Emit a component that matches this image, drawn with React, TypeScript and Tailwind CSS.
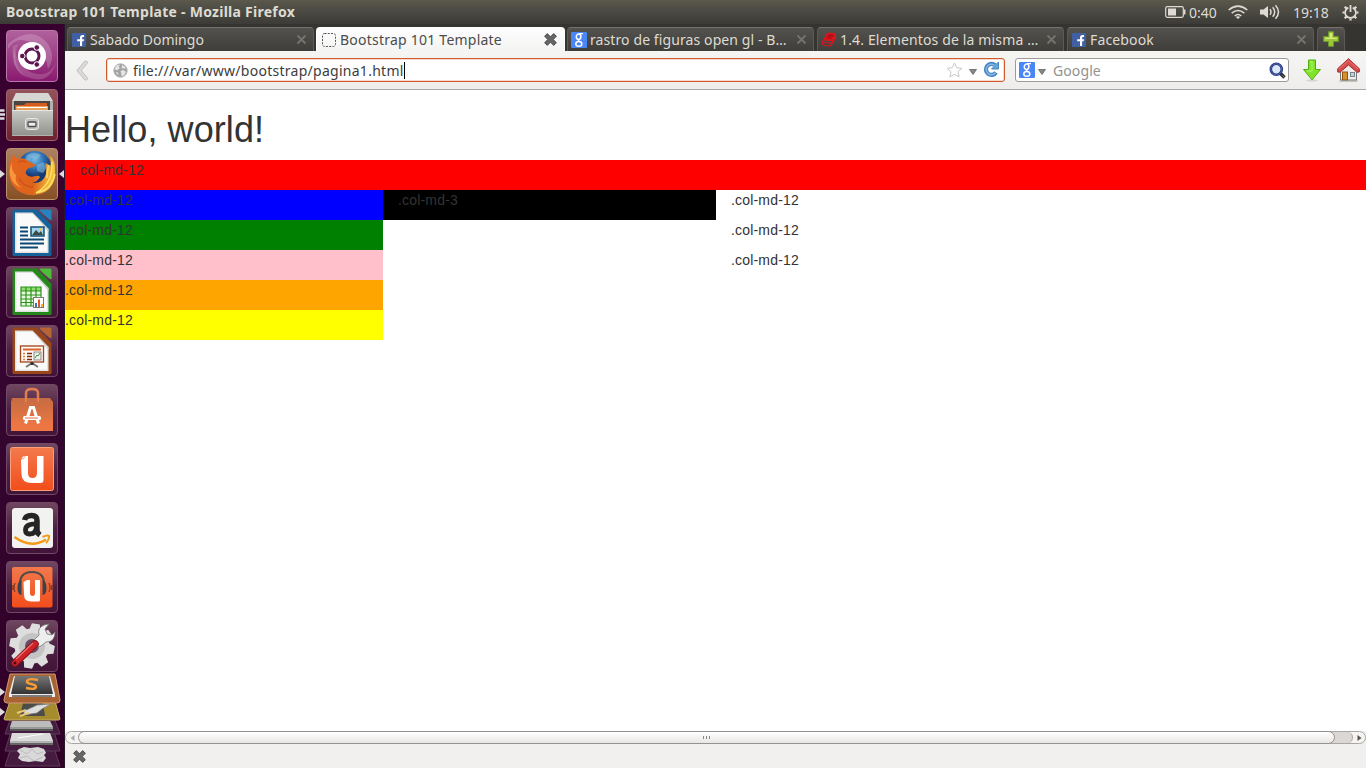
import React from "react";

const ui = "font-['Noto_Sans','Open_Sans',sans-serif]";

function Facebook() {
  return (
    <svg width="14" height="14" viewBox="0 0 14 14" className="shrink-0">
      <rect width="14" height="14" fill="#4160a4" />
      <path d="M8 13V8.3H5.2V6.2H8V4.6Q8 2 10.6 2H12v2h-1.1q-.8 0-.8.9v1.3H12l-.3 2.1h-1.6V13z" fill="#fff" />
    </svg>
  );
}

function GoogleG() {
  return (
    <svg width="16" height="16" viewBox="0 0 16 16" className="shrink-0">
      <rect width="16" height="16" rx="1" fill="#4a86f5" />
      <g fill="none" stroke="#fff">
        <ellipse cx="7.6" cy="4.8" rx="2.3" ry="2.7" strokeWidth="1.5" />
        <path d="M8 1.7h4M8.9 7.2q-2.8 1-.4 2.2" strokeWidth="1.3" />
        <ellipse cx="7.8" cy="11.9" rx="3" ry="2.3" strokeWidth="1.5" />
      </g>
    </svg>
  );
}

function Book() {
  return (
    <svg width="16" height="16" viewBox="0 0 16 16" className="shrink-0">
      <path d="M6.500 1 14.500 1.800 10.500 8.500 2.500 8z" fill="#d3101a" stroke="#e0141c" strokeLinejoin="round" />
      <path d="M2.500 8 1.300 10.500Q1.200 12.800 3 13.300l6.500.7L14.500 6V2M2.500 10.500l7.500.700 4-6.500" fill="none" stroke="#e0141c" strokeWidth="1.100" />
      <path d="m7.500 3.200 4.500.300M6.500 5.200l4.200.200" stroke="#7d1014" strokeWidth=".8" />
    </svg>
  );
}

function CloseDim() {
  return (
    <svg width="11" height="11" viewBox="0 0 11 11" className="shrink-0">
      <path d="m1.500 1.500 8 8m0-8-8 8" stroke="#75736e" strokeWidth="1.900" />
    </svg>
  );
}

function CloseBold() {
  return (
    <svg width="13" height="13" viewBox="0 0 13 13" className="shrink-0">
      <path d="M3.3.6 6.5 3.8 9.7.6l2.7 2.7-3.2 3.2 3.2 3.2-2.7 2.7-3.2-3.2-3.2 3.2L.6 9.7l3.2-3.2L.6 3.3z" fill="#666" stroke="#444" strokeWidth=".9" />
    </svg>
  );
}

function Tab({ icon, label, spacing, width, active }: { icon: React.ReactNode; label: string; spacing: string; width: string; active?: boolean }) {
  return (
    <div
      className={`flex h-6 shrink-0 items-center rounded-t-[4px] border border-b-0 ${width} ${
        active ? "border-white bg-gradient-to-b from-[#fdfdfd] to-[#f4f4f3] pr-[7px] text-[#4c4c4c]" : "border-[#74736e] border-x-[#5b5a56] bg-gradient-to-b from-[#53524e] to-[#3f3e3a] pr-[6px] text-[#dfdbd2]"
      }`}
    >
      {icon}
      <span className={`whitespace-nowrap text-[14px] leading-[22px] ${spacing}`}>{label}</span>
      <span className="ml-auto">{active ? <CloseBold /> : <CloseDim />}</span>
    </div>
  );
}

function TitleBar() {
  return (
    <header className="flex h-6 items-center bg-gradient-to-b from-[#5b594c] via-[#4a4942] to-[#3c3b37] text-[#dfdbd2]">
      <span className="ml-[6px] whitespace-nowrap text-[14px] font-bold leading-6 tracking-[0.26px]">Bootstrap 101 Template - Mozilla Firefox</span>
      <div className="ml-auto flex items-center">
        <svg width="21" height="12" viewBox="0 0 21 12">
          <rect x=".7" y=".7" width="17.6" height="10.6" rx="1.5" fill="none" stroke="#dfdbd2" strokeWidth="1.2" />
          <rect x="3" y="2.5" width="8" height="7" fill="#dfdbd2" />
          <path d="M19.7 3.5v5" stroke="#dfdbd2" strokeWidth="1.5" />
        </svg>
        <span className="ml-[3px] w-[28px] whitespace-nowrap text-[14px]">0:40</span>
        <svg width="20" height="14" viewBox="0 0 20 14" className="ml-[11px]">
          <g fill="none" stroke="#dfdbd2" strokeWidth="1.6">
            <path d="M.7 5Q10-2.8 19.3 5M3.7 8.2q6.3-5.4 12.6 0M6.7 11q3.3-3 6.6 0" />
          </g>
          <path d="m7.8 12 2.2 2 2.2-2Q10 10.4 7.8 12z" fill="#dfdbd2" />
        </svg>
        <svg width="20" height="16" viewBox="0 0 20 16" className="ml-[12px]">
          <path d="M0 5.500h3.500L8 2v12l-4.500-3.500H0z" fill="#dfdbd2" />
          <path d="M10 5.300q2 2.700 0 5.400M12.700 3.200q4 4.800 0 9.600M15.500 1.200q6 6.800 0 13.600" fill="none" stroke="#dfdbd2" strokeWidth="1.500" />
        </svg>
        <span className="ml-[13px] w-[36px] whitespace-nowrap text-[14px]">19:18</span>
        <svg width="17" height="17" viewBox="0 0 17 17" className="ml-[13px] mr-[7px]">
          <g fill="none" stroke="#dfdbd2">
            <path d="M6.300 3.600a5.400 5.400 0 1 0 4.400 0" strokeWidth="1.800" />
            <path d="M8.500 1v7" strokeWidth="1.800" />
            <path d="M.5 8.500h2M14.500 8.500h2M8.500 14.500v2M2.700 2.700l1.700 1.700M14.300 2.700l-1.700 1.700M2.700 14.300l1.700-1.700M14.300 14.300l-1.700-1.700" strokeWidth="2.200" />
          </g>
        </svg>
      </div>
    </header>
  );
}

function TabStrip() {
  return (
    <div className="flex h-[27px] items-end bg-[#353430] pl-[2px]">
      <Tab width="mr-[2px] w-[247px] pl-1" icon={<Facebook />} label="Sabado Domingo" spacing="ml-1" />
      <Tab
        width="mr-[2px] w-[249px] pl-[5px]"
        active
        icon={
          <svg width="14" height="14" viewBox="0 0 14 14" className="shrink-0">
            <rect x=".5" y=".5" width="13" height="13" rx="2" fill="none" stroke="#555" strokeDasharray="2 1.250" />
          </svg>
        }
        label="Bootstrap 101 Template"
        spacing="ml-1 tracking-[0.23px]"
      />
      <Tab width="mr-[3px] w-[247px] pl-[3px]" icon={<GoogleG />} label="rastro de figuras open gl - B…" spacing="ml-[3px] tracking-[0.1px]" />
      <Tab width="mr-[3px] w-[247px] pl-[3px]" icon={<Book />} label="1.4. Elementos de la misma …" spacing="ml-[3px] tracking-[0.15px]" />
      <Tab width="mr-[3px] w-[247px] pl-1" icon={<Facebook />} label="Facebook" spacing="ml-1 tracking-[0.15px]" />
      <div className="flex h-6 w-[28px] items-center justify-center rounded-t-[4px] border border-b-0 border-[#74736e] border-x-[#5b5a56] bg-gradient-to-b from-[#53524e] to-[#3f3e3a]">
        <svg width="16" height="16" viewBox="0 0 16 16" className="-mt-[2px]">
          <path d="M5.500.7h5v4.800h4.800v5h-4.800v4.800h-5v-4.800H.7v-5h4.800z" fill="#9dc73b" stroke="#6c9b25" />
          <path d="M6.700 2h2.600v4.700H14v1.300H2V6.700h4.700z" fill="#d5e879" />
        </svg>
      </div>
    </div>
  );
}

function Toolbar() {
  return (
    <div className="flex h-[39px] items-center border-b border-[#aaa8a5] bg-gradient-to-b from-[#f5f5f4] to-[#eeedeb]">
      <svg width="13" height="21" viewBox="0 0 13 21" className="ml-[11px]">
        <path d="M9.800 2.500 3 10.500l6.800 8" fill="none" stroke="#bdbcba" strokeWidth="4" strokeLinecap="round" />
        <path d="M9.800 2.500 3 10.500l6.800 8" fill="none" stroke="#dcdbd9" strokeWidth="2.500" strokeLinecap="round" />
      </svg>
      <div className="ml-[17px] flex h-6 w-[899px] items-center rounded-[3px] border border-[#cf5a30] bg-white pl-[6px] pr-[4px] shadow-[inset_0_0_0_1px_#f9d9cb]">
        <svg width="15" height="15" viewBox="0 0 15 15" className="shrink-0">
          <circle cx="7.500" cy="7.500" r="6.700" fill="#a2a2a2" stroke="#b5b5b5" />
          <path d="M3 3q3-2 4-1L5.500 3.500 7 5 4 7.500 1.500 6zM9 2l3.500 2-.5 2-2-1-1.500 1zM7.500 8l3-1 2.500 2-2 3.500-2.500.5-.5-3zM2.500 9l2.500.500.500 3z" fill="#e4e4e4" />
        </svg>
        <span className="ml-[5px] whitespace-nowrap text-[14px] tracking-[0.27px] text-[#3c3c3c]">file:///var/www/bootstrap/pagina1.html</span>
        <span className="h-[17px] w-px bg-black" />
        <svg width="17" height="16" viewBox="0 0 17 16" className="ml-auto">
          <path d="m8.500 1 2.200 4.700 5.200.6-3.900 3.500 1.100 5.100-4.600-2.600-4.600 2.600L5 9.800 1.100 6.300l5.200-.6z" fill="#fff" stroke="#c7c7c7" />
        </svg>
        <svg width="8" height="6" viewBox="0 0 8 6" className="ml-[6px] mt-[3px]">
          <path d="M.5.500h7L4 5.500z" fill="#888" stroke="#555" strokeWidth=".7" />
        </svg>
        <svg width="17" height="17" viewBox="0 0 17 17" className="-mt-[2px] ml-[6px]">
          <path d="M13 11.500A5.500 5.500 0 1 1 12 4.200" fill="none" stroke="#4585c4" strokeWidth="4.200" />
          <path d="M15.500 1v7H8.500l2.500-2.500z" fill="#6ca4d8" stroke="#4585c4" />
          <path d="M12.500 11.700A5.200 5.200 0 1 1 11.500 4.300" fill="none" stroke="#8ab8e2" strokeWidth="1.500" />
        </svg>
      </div>
      <div className="ml-[10px] flex h-6 w-[274px] items-center rounded-[3px] border border-[#9d9b98] bg-white pl-[3px] pr-[2px]">
        <GoogleG />
        <svg width="8" height="6" viewBox="0 0 8 6" className="ml-[3px] mt-[3px]">
          <path d="M.5.500h7L4 5.500z" fill="#888" stroke="#555" strokeWidth=".7" />
        </svg>
        <span className="ml-[7px] text-[14px] tracking-[0.1px] text-[#929292]">Google</span>
        <svg width="17" height="17" viewBox="0 0 17 17" className="ml-auto">
          <path d="m11 11 4.500 4.500" stroke="#333" strokeWidth="3.500" />
          <circle cx="7.300" cy="7.300" r="5.500" fill="#dce8f8" stroke="#263a83" strokeWidth="2.600" />
          <circle cx="7.300" cy="7.300" r="5.500" fill="none" stroke="#596fb5" strokeWidth=".8" />
          <path d="m13.500 13.500 2 2" stroke="#888" />
        </svg>
      </div>
      <svg width="20" height="23" viewBox="0 0 20 23" className="ml-[13px]">
        <ellipse cx="10" cy="21.500" rx="6" ry="1.200" fill="#d3d3d0" />
        <path d="M6.500 1h7v9.500h5L10 20.800 1.500 10.500h5z" fill="#82e32b" stroke="#4fae0b" strokeLinejoin="round" />
        <path d="M8 2.500h2V12H5" fill="none" stroke="#b2f36e" />
      </svg>
      <svg width="23" height="24" viewBox="0 0 23 24" className="ml-[15px]">
        <path d="M3.500 10.500 11.500 4l8 6.500V22h-16z" fill="#efeeec" stroke="#777" />
        <rect x="5.500" y="14" width="5" height="8" fill="#d6912f" stroke="#8f550e" />
        <rect x="13.500" y="14.500" width="4" height="4" fill="#bcd1dc" stroke="#788487" />
        <path d="M11.500.700.700 10.700V14l2.300.200 8.500-7.200 8.500 7.200 2.300-.200v-3.300z" fill="#d74c4c" stroke="#a92b2c" strokeLinejoin="round" />
        <path d="m2 11 9.500-8.700L21 11" fill="none" stroke="#e67876" />
        <path d="M2.500 23h18" stroke="#9a9a98" />
      </svg>
    </div>
  );
}

function DocIcon({ dark, mid, children }: { dark: string; mid: string; children: React.ReactNode }) {
  return (
    <>
      <path d="M8 2.500h22.500L45.500 18v29.500Q45.500 49 44 49H8Q6.500 49 6.500 47.500V4Q6.500 2.500 8 2.500z" fill={dark} />
      <path d="M35 2.500h9q1.500 0 1.500 1.500v9.500Q43 13 33.500 3.500q0-1 1.500-1z" fill={mid} />
      <path d="M9 5.500h17.500L42.500 22v24H9z" fill="#e2e2e2" />
      <path d="M10.500 7h16L41 22v22.500H10.500z" fill="#fafafa" />
      <path d="m26.500 5.500 16 16.500v3z" fill="#cfcfcf" />
      {children}
    </>
  );
}

const apps: { name: string; tile: string; art: React.ReactNode; left?: "pips" | "arrow"; right?: boolean }[] = [
  {
    name: "dash",
    tile: "bg-gradient-to-b from-[#b0609d] to-[#8a1870] border-[#b878ac]",
    art: (
      <>
        <path d="M2 14Q26-6 42 14q8 13 0 25-4-28-27-29Q7 10 2 19z" fill="#fff" opacity=".2" />
        <path d="M50 33Q42 57 19 46 5 39 8 20q9 26 29 24 8-1 13-11z" fill="#fff" opacity=".17" />
        <path d="M7 16q-3 24 14 32Q4 35 12 14z" fill="#fff" opacity=".15" />
        <circle cx="26" cy="26" r="14" fill="#fff" />
        <circle cx="26" cy="26" r="7" fill="none" stroke="#5d1450" strokeWidth="3" />
        <g fill="#5d1450" stroke="#fff" strokeWidth="1">
          <circle cx="16.300" cy="26" r="2.800" /><circle cx="30.800" cy="17.500" r="2.800" /><circle cx="30.800" cy="34.500" r="2.800" />
        </g>
      </>
    ),
  },
  {
    name: "files",
    tile: "bg-gradient-to-b from-[#94535c] to-[#6e202e] border-[#9e646c]",
    left: "pips",
    art: (
      <>
        <path d="M10 4h32l5 9v34H6V13z" fill="#b1b1ad" />
        <path d="M10 4h32l5 8H6z" fill="#d6d6d3" />
        <path d="M8 12h36v11H8z" fill="#4b4542" />
        <path d="M9 16h9l2-2h21v9H9z" fill="#d65b21" />
        <path d="M10 17h32v6H10z" fill="#eba05c" /><path d="M11 18.500h30" stroke="#fff" />
        <path d="M6 21h41v25H6z" fill="url(#silver)" />
        <path d="M6 21.500h41" stroke="#e6e6e4" />
        <rect x="19.500" y="29.500" width="13" height="11" rx="2.500" fill="#bcbcba" stroke="#e8e8e6" />
        <rect x="22" y="33" width="8" height="4.500" rx="1" fill="#eee" stroke="#4b4b4b" strokeWidth="1.300" />
      </>
    ),
  },
  {
    name: "firefox",
    tile: "bg-gradient-to-b from-[#ad8162] to-[#875023] border-[#b9926f]",
    left: "arrow",
    right: true,
    art: (
      <>
        <circle cx="28.500" cy="20" r="17" fill="url(#globe)" />
        <path d="M21 7q8-4 14 0l-3 4-7-1-2 4-4-2zM31 17l6-3 4 5-4 6-6-2z" fill="#8fc5e5" opacity=".5" />
        <path d="M5 12Q6 8 8 7l3 4q5-2 10 1 4 3 9 5-3 3-7 3-4 2-3 6 3 4 9 2 4-1 5 1-3 5-8 6 11 1 14-9 1-8-1-11 4 1 5 4 2-7-1-12 7 5 6 17 0 14-10 20-11 6-23 1Q4 39 3 26q-1-8 2-14z" fill="url(#fox)" />
        <path d="M6 15q-1 8 4 12-2 8 6 13-10-3-12-13-1-7 2-12z" fill="#f9953a" />
        <path d="M46 14q1 22-16 31 16-3 19-19" fill="none" stroke="#ffdf61" strokeWidth="1.500" />
        <path d="M43 17q-2 5-2 13" fill="none" stroke="#fbd258" strokeWidth="2" />
        <path d="M12 14q4-2 8 0M13 30q4 9 14 9" fill="none" stroke="#c94815" strokeWidth="1.500" opacity=".7" />
      </>
    ),
  },
  {
    name: "writer",
    tile: "",
    art: (
      <DocIcon dark="#15639a" mid="#2783bd">
        <path d="M14 20.500h8M14 24.500h8M14 28.500h8M14 32.500h24M14 36.500h24M14 40.500h18" stroke="#0d4873" strokeWidth="1.800" />
        <rect x="25" y="20" width="13" height="9" fill="#9fd6ee" stroke="#124e76" strokeWidth="1.500" />
        <path d="m26 28 4-5 3 3 2-2 2 4z" fill="#3d4b42" /><circle cx="34.500" cy="22.500" r="1.200" fill="#f3c94c" />
      </DocIcon>
    ),
  },
  {
    name: "calc",
    tile: "",
    art: (
      <DocIcon dark="#24891b" mid="#50bd3a">
        <path d="M15 21h20v19H15z" fill="#eaf8e1" /><path d="M15 21h20v4H15z" fill="#95db75" />
        <path d="M15 21h20v19H15zM15 25h20M15 29h20M15 33h20M15 36.500h20M20 21v19M25 21v19M30 21v19" fill="none" stroke="#279317" strokeWidth="1.200" />
        <rect x="27.500" y="31.500" width="10" height="10" fill="#fff" stroke="#777" />
        <path d="M29 37h2v4h-2z" fill="#347bbc" /><path d="M32 33.500h2V41h-2z" fill="#e05a25" /><path d="M35 38h2v3h-2z" fill="#efb52c" />
      </DocIcon>
    ),
  },
  {
    name: "impress",
    tile: "",
    art: (
      <DocIcon dark="#9a461a" mid="#b76534">
        <rect x="14.500" y="21" width="23" height="16" fill="#fffaf5" stroke="#a34319" strokeWidth="1.300" />
        <path d="M17 24.500h18" stroke="#dc642c" strokeWidth="2" />
        <path d="M17 28.500h2M17 31.500h2M17 34.500h2" stroke="#e0813d" strokeWidth="1.500" />
        <path d="M21 28.500h5M21 31.500h5M21 34.500h5" stroke="#7d2d0d" strokeWidth="1.500" />
        <rect x="28" y="27" width="7" height="8" fill="#eee" stroke="#888" /><path d="m29 33 2-3 1 1 2-3" stroke="#3e9e32" fill="none" />
        <path d="M26 37v3m0-2-6 4m6-4 6 4" stroke="#777" strokeWidth="2" /><path d="M26 37v3" stroke="#333" strokeWidth="3" />
      </DocIcon>
    ),
  },
  {
    name: "software",
    tile: "",
    art: (
      <>
        <path d="M6 14h38l3 4v29H5V18z" fill="url(#bag)" /><path d="M5 37h42v10H5z" fill="#ed7745" opacity=".55" />
        <path d="M20 18V9q0-4 6-4t6 4v9" fill="none" stroke="#e17c50" strokeWidth="2.500" />
        <path d="m19.500 39.500 5-16h3l5 16" fill="none" stroke="#fff" strokeWidth="3" />
        <rect x="17" y="32" width="18" height="4" rx="1.500" fill="#fff" /><path d="M19 34h13" stroke="#e9713d" />
      </>
    ),
  },
  {
    name: "ubuntu-one",
    tile: "",
    art: (
      <>
        <rect x="4.500" y="4.500" width="43" height="43" rx="2" fill="url(#one)" stroke="#f8a07a" />
        <path d="M15 17q3-1 5-4h2v17q0 5 4.500 5t4.500-5V13h6.500v24q0 3-3 3H26Q15.500 40 15.500 31z" fill="#fff" /><path d="M20 13l-3 .500-2 3.500" fill="#fff" />
      </>
    ),
  },
  {
    name: "amazon",
    tile: "",
    art: (
      <>
        <rect x="6" y="6" width="41" height="40" rx="3" fill="#f2f2f1" />
        <g fill="none" stroke="#252525">
          <path d="M18.500 18q1-4.500 7-4.500 5.500 0 5.500 5V28q0 3 3 5" strokeWidth="5.500" />
          <path d="M31 22q-11.500-.5-11.500 6 0 4 4 4 7 0 7-8" strokeWidth="4.800" />
        </g>
        <path d="M8.500 35Q25 47 40 37.500" fill="none" stroke="#f39a16" strokeWidth="2.600" /><path d="M36.500 35q5-2.500 6.500-1 .5 3-3 7" fill="none" stroke="#f39a16" strokeWidth="2" />
      </>
    ),
  },
  {
    name: "music",
    tile: "",
    art: (
      <>
        <rect x="6" y="6" width="40.500" height="40.500" rx="2" fill="url(#one)" />
        <path d="M14 25q-1-14 12-14t12 14" fill="none" stroke="#4b4b4b" strokeWidth="2" />
        <path d="M15.500 19q-4 1-4 8t4 7zM36.500 19q4 1 4 8t-4 7z" fill="#39434a" />
        <path d="M9 22q-2 5 0 9M43 22q2 5 0 9M7 24v5M45.500 24v5" fill="none" stroke="#7a3c2a" strokeWidth="1.200" />
        <path d="M17.500 21q2-1 3.500-2h3v13q0 3 2.500 3t2.500-3V19H34v20q0 1.500-1.500 1.500H25q-7 0-7-7z" fill="#fff" />
      </>
    ),
  },
  {
    name: "settings",
    tile: "",
    art: (
      <>
        <g fill="#dedede">
          <circle cx="26" cy="26" r="17.500" />
          {[0, 45, 90, 135, 180, 225, 270, 315].map((a) => (
            <path key={a} d="m20.500 10 1.500-6.500h8l1.500 6.500z" transform={`rotate(${a + 10} 26 26)`} />
          ))}
        </g>
        <circle cx="26" cy="26" r="13" fill="#c4c4c4" /><circle cx="26" cy="26" r="7" fill="#6a4a64" />
        <path d="m28 20 5-5q-2-7 5-10l5-1-4 5 2 5 5 1 3-3q0 10-9 10l-5 4-4 1z" fill="#eee" stroke="#777" strokeWidth=".8" />
        <path d="m9 43 20-19" stroke="#851218" strokeWidth="7.500" strokeLinecap="round" /><path d="m9 43 20-19" stroke="#cf2329" strokeWidth="5.500" strokeLinecap="round" />
        <path d="m10 39 17-16" stroke="#ee7773" strokeWidth="1.200" /><circle cx="9" cy="43" r="1.500" fill="#420b0e" />
      </>
    ),
  },
];

function Defs() {
  return (
    <svg width="0" height="0" className="absolute">
      <defs>
        <linearGradient id="silver" x2="0" y2="1"><stop stopColor="#c9c9c6" /><stop offset="1" stopColor="#92928f" /></linearGradient>
        <radialGradient id="globe" cy=".25"><stop stopColor="#76bce4" /><stop offset=".6" stopColor="#2869ac" /><stop offset="1" stopColor="#17376f" /></radialGradient>
        <linearGradient id="fox" x2="1" y2=".1"><stop stopColor="#e66520" /><stop offset=".6" stopColor="#dc641b" /><stop offset="1" stopColor="#f5c642" /></linearGradient>
        <linearGradient id="bag" x2="0" y2="1"><stop stopColor="#c76b42" /><stop offset="1" stopColor="#f07a42" /></linearGradient>
        <linearGradient id="one" x2="0" y2="1"><stop stopColor="#f37a4d" /><stop offset="1" stopColor="#f24d1b" /></linearGradient>
        <linearGradient id="slab" x2="0" y2="1"><stop stopColor="#777" /><stop offset="1" stopColor="#333" /></linearGradient>
      </defs>
    </svg>
  );
}

function Launcher() {
  return (
    <nav className="relative flex w-[65px] shrink-0 flex-col gap-[7px] overflow-hidden border-r border-[#25162a] bg-gradient-to-b from-[#38002f] via-[#35062f] to-[#300028] pl-[6px] pt-[6px]">
      <Defs />
      {apps.map((a) => (
        <div key={a.name} className={`relative h-[52px] w-[52px] shrink-0 rounded-[4px] border ${a.tile || "border-[#714867] bg-gradient-to-b from-[#70475f] via-[#4c2043] to-[#421538]"}`}>
          <svg width="52" height="52" viewBox="0 0 52 52" className="-ml-px -mt-px block">{a.art}</svg>
          {a.left === "arrow" && <svg width="5" height="8" className="absolute -left-[7px] top-[21px]"><path d="m0 0 5 4-5 4z" fill="#ddd" /></svg>}
          {a.left === "pips" && <svg width="5" height="12" className="absolute -left-[7px] top-[19px]"><path d="M0 1.500h4.500M0 5.500h5M0 9.500h4.500" stroke="#ddd" strokeWidth="2.300" /></svg>}
          {a.right && <svg width="5" height="8" className="absolute -right-[7px] top-[21px]"><path d="M5 0 0 4l5 4z" fill="#ddd" /></svg>}
        </div>
      ))}
      <svg width="65" height="96" viewBox="0 672 65 96" className="-ml-[6px] -mt-[7px] shrink-0 overflow-visible">
        <path d="M9 674h46l5 28H4z" fill="#3b0935" />
        <path d="m13 742-8 24h55l-8-24z" fill="#451c3f" stroke="#5f3b59" />
        <path d="m13 725-8 26h55l-8-26z" fill="#451c3f" stroke="#5f3b59" />
        <path d="m13 712-8 22h55l-8-22z" fill="#451c3f" stroke="#5f3b59" />
        <path d="m19 749 5-2 6 1 8-1 6 2 2 4-2 2 2 3-3 4-8-1-6 1-7-1-4-3 2-4-3-3z" fill="#d8d8d8" />
        <path d="m20 750 7 4 5-5 5 5 6-2M20 758l7-2 7 5 9-4" fill="none" stroke="#bbb" />
        <path d="M12 733h38l3 8v4H10v-4z" fill="#666" /><path d="M12 733h38l3 8H10z" fill="#dadada" /><path d="m18 738 25-4M10 742h43" stroke="#fff" />
        <path d="M12 721h38l3 6v4H10v-4z" fill="#555" /><path d="M12 721h38l3 6H10z" fill="#bcbcbc" /><path d="M10 728h43" stroke="#ddd" />
        <path d="M10 701h45l5 18q0 1-2 1H6q-2 0-2-1z" fill="#a78c2e" stroke="#c7b06b" />
        <path d="M23 703h20l2 13H20z" fill="#4c4c4a" />
        <path d="m24 711 9-4 4-2 14-1-9 5-5 4-13 2z" fill="#ddd" stroke="#777" strokeWidth=".7" />
        <path d="m17 713 9-3m-6 6 9-3" stroke="#e8c778" strokeWidth="2" />
        <path d="M10 674h45l5 26q0 3-3 3H7q-3 0-3-3z" fill="#a96332" stroke="#d09a70" />
        <path d="M14 676h36l5 18v3H9v-3z" fill="#eee" /><path d="M15 676h34l4 18H11z" fill="url(#slab)" /><path d="M12 696h40" stroke="#555" strokeWidth="1.500" />
        <path d="M38 680q-9-2-11 1-1 2 4 3 5 1 5 3-1 3-10 1" fill="none" stroke="#f59c36" strokeWidth="2.400" />
        <path d="m0 688 5 4-5 4zM0 708l5 4-5 4z" fill="#ddd" />
      </svg>
    </nav>
  );
}

function Page() {
  return (
    <main className="flex h-[641px] flex-col bg-white font-['Liberation_Sans',Arial,sans-serif] text-[14px] leading-5 tracking-[0.18px] text-[#333]">
      <h1 className="mb-[10px] mt-5 h-10 text-[36px] font-normal leading-10 tracking-[0.08px]">Hello, world!</h1>
      <div className="h-[30px] bg-[red] pl-[15px]">col-md-12</div>
      <div className="flex">
        <div className="w-[318px]">
          <div className="h-[30px] bg-[blue]">.col-md-12</div>
          <div className="h-[30px] bg-[green]">.col-md-12</div>
          <div className="h-[30px] bg-[pink]">.col-md-12</div>
          <div className="h-[30px] bg-[orange]">.col-md-12</div>
          <div className="h-[30px] bg-[yellow]">.col-md-12</div>
        </div>
        <div className="h-[30px] w-[333px] bg-black pl-[15px]">.col-md-3</div>
        <div className="pl-[15px]">
          <div className="h-[30px]">.col-md-12</div>
          <div className="h-[30px]">.col-md-12</div>
          <div className="h-[30px]">.col-md-12</div>
        </div>
      </div>
    </main>
  );
}

function BottomBars() {
  return (
    <footer className="bg-[#f1f0ee]">
      <div className="flex h-[13px] items-stretch rounded-full border border-[#aaa7a3] bg-[#f5f4f3]">
        <div className="flex w-[12px] items-center pl-[4px]">
          <svg width="5" height="6"><path d="M4.500 0v6L.5 3z" fill="#aaa" /></svg>
        </div>
        <div className="relative z-10 -my-px flex w-[1257px] shrink-0 items-center justify-center gap-[2px] rounded-full border border-[#94918e] bg-gradient-to-b from-white to-[#e9e7e5]">
          <i className="h-[3px] w-px bg-[#888]" /><i className="h-[3px] w-px bg-[#888]" /><i className="h-[3px] w-px bg-[#888]" />
        </div>
        <div className="-ml-[8px] w-[26px] shrink-0 rounded-r-full border-r border-[#aaa7a3] bg-[#dad7d4]" />
        <div className="flex flex-1 items-center justify-end pr-[3px]">
          <svg width="5" height="6"><path d="M.5 0v6l4-3z" fill="#555" /></svg>
        </div>
      </div>
      <div className="flex h-6 items-center pl-2"><CloseBold /></div>
    </footer>
  );
}

export default function App() {
  return (
    <div className={`flex h-[768px] w-[1366px] flex-col overflow-hidden ${ui}`}>
      <TitleBar />
      <div className="flex min-h-0 flex-1">
        <Launcher />
        <div className="flex min-w-0 flex-1 flex-col">
          <TabStrip />
          <Toolbar />
          <Page />
          <BottomBars />
        </div>
      </div>
    </div>
  );
}
